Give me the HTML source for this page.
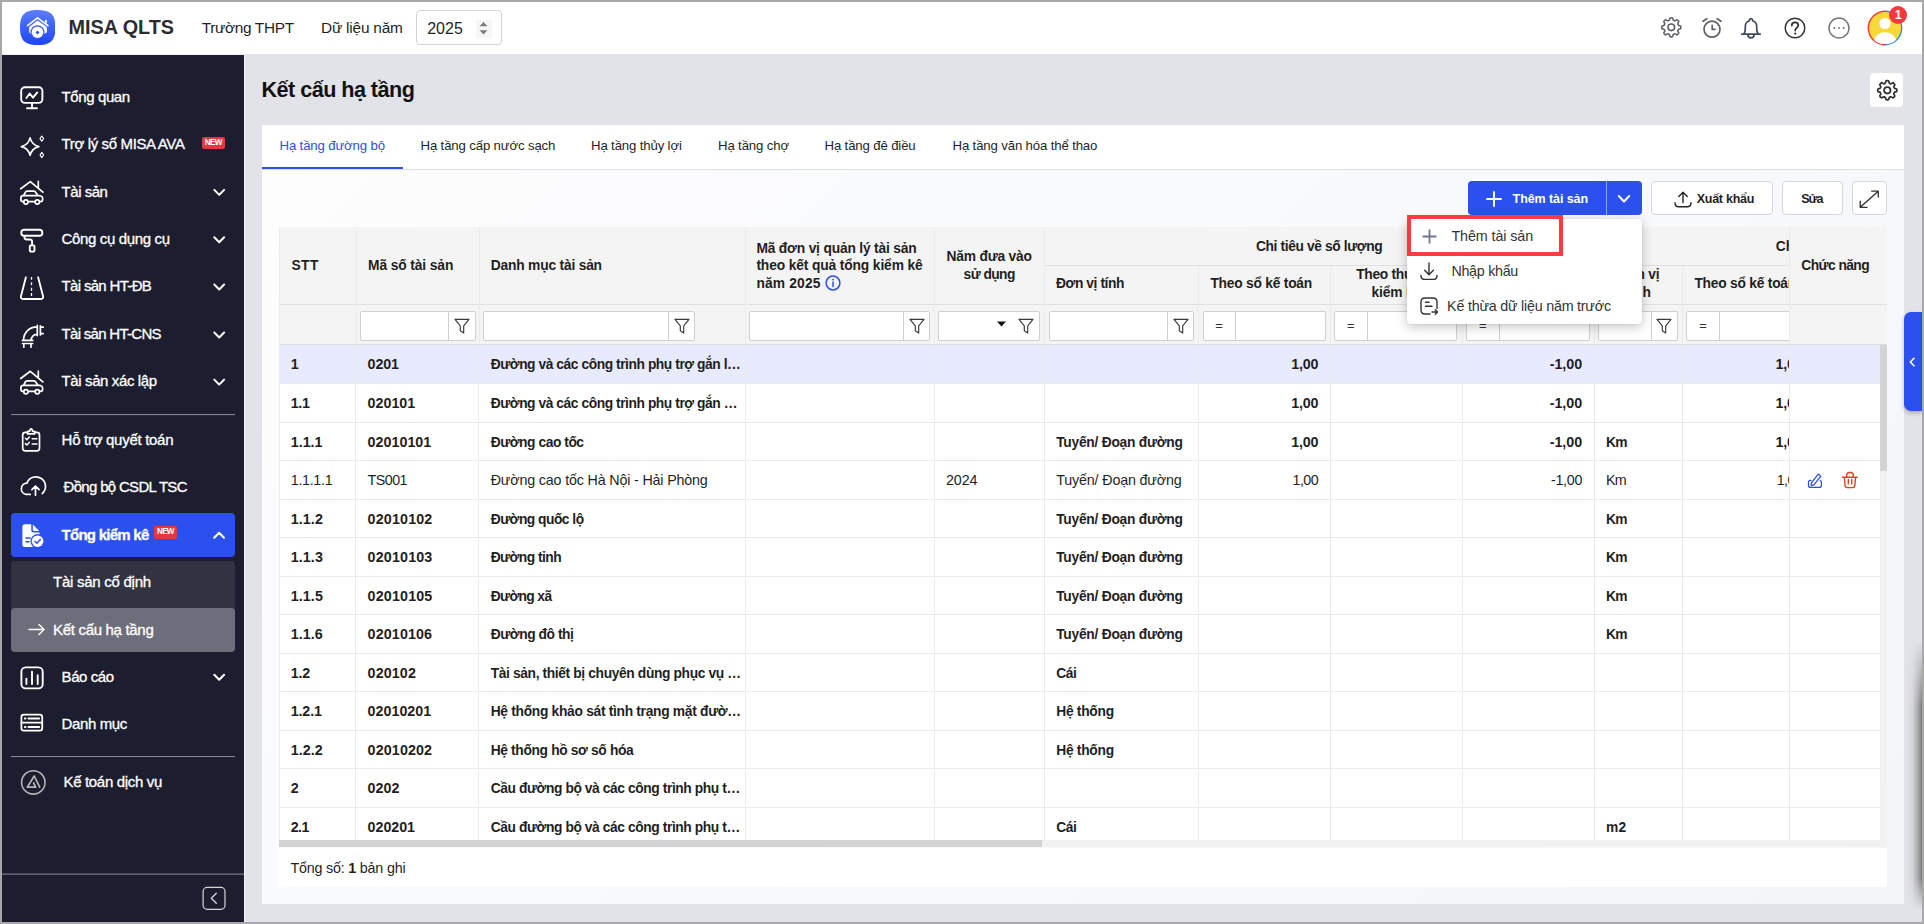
<!DOCTYPE html>
<html lang="vi">
<head>
<meta charset="utf-8">
<title>MISA QLTS - Kết cấu hạ tầng</title>
<style>
*{box-sizing:border-box;margin:0;padding:0}
html,body{width:1924px;height:924px;overflow:hidden}
body{font-family:"Liberation Sans",sans-serif;font-size:14.3px;color:#1f1f1f;background:#a8a8a8;position:relative}
.abs{position:absolute}
.tx{position:absolute;white-space:nowrap}
#app{position:absolute;left:2px;top:2px;width:1920px;height:920px;background:#e2e3e9;overflow:hidden}
/* ---------- top header ---------- */
#top{position:absolute;left:0;top:0;width:1920px;height:52.2px;background:#fff}
#topw{position:absolute;left:0;top:52px;width:243px;height:868px;background:#f0f1f6}
#brand{position:absolute;left:66.5px;top:13px;font-weight:bold;font-size:19.800px;line-height:24px;color:#2b2d33;white-space:nowrap}
#unit{position:absolute;left:199.7px;top:15.7px;font-size:15.4px;line-height:20px;color:#1f1f1f;white-space:nowrap;letter-spacing:-.33px}
#yl{position:absolute;left:319px;top:15.7px;font-size:15.4px;line-height:20px;color:#1f1f1f;white-space:nowrap;letter-spacing:-.2px}
#ysel{position:absolute;left:414.2px;top:8.3px;width:85.600px;height:34.700px;border:1px solid #d2d5dc;border-radius:4px;background:#fff}
#ysel span{position:absolute;left:10px;top:8px;font-size:16px;line-height:20px;color:#1f1f1f}
.hic{position:absolute;top:14px;width:24px;height:24px}
/* ---------- sidebar ---------- */
#side{position:absolute;left:0;top:52.7px;width:241.8px;height:867.3px;background:#1c1d2e;color:#fff}
.mi{position:absolute;left:9px;width:224px;height:43.5px;border-radius:4px}
.mi .t{-webkit-text-stroke:.3px #fff;position:absolute;left:50.600px;top:11.5px;font-size:15px;line-height:20px;white-space:nowrap;letter-spacing:-.35px}
.mi.on{background:#2b50ed;height:44px}
.new{position:absolute;background:#e5373f;color:#fff;font-size:8.2px;font-weight:bold;line-height:12.4px;height:12.4px;width:23.1px;text-align:center;border-radius:2px;letter-spacing:-.75px;text-indent:-.6px}
.sub{position:absolute;left:9px;width:224px;color:#fff}
.sub .t{-webkit-text-stroke:.3px #fff;position:absolute;left:42px;font-size:15px;line-height:20px;white-space:nowrap;letter-spacing:-.35px}
/* ---------- main ---------- */
#title{position:absolute;left:259.5px;top:73.700px;font-size:21.600px;line-height:28px;font-weight:bold;color:#111;white-space:nowrap;letter-spacing:-.53px}
#panel{position:absolute;left:260px;top:123px;width:1642px;height:779px;background:#fff;background:linear-gradient(135deg,#fdfdfe 0%,#f3f6f9 100%)}
#tabs{position:absolute;left:0;top:0;width:1642px;height:44.700px;background:#fff;border-bottom:1px solid #dcdfe6}
.tab{position:absolute;top:12px;font-size:13.2px;line-height:18px;color:#1f1f1f;white-space:nowrap;letter-spacing:-.14px}
.tab.on{color:#2b50ed}
#tabline{position:absolute;left:0;top:42px;width:141px;height:2.400px;background:#2b50ed}
</style>
</head>
<body>
<div id="app">

<!-- TOP HEADER -->
<div id="top">
  <div id="brand">MISA QLTS</div>
  <div id="unit">Trường THPT</div>
  <div id="yl">Dữ liệu năm</div>
  <div id="ysel"><span>2025</span>
    <div class="abs" style="left:59px;top:8.500px;width:16px;height:18px;background:#f6f6f6"></div>
    <svg class="abs" style="left:61.300px;top:10.200px;width:11px;height:15px" viewBox="0 0 11 15"><path d="M5.500 1L9.400 5.300H1.600Z M5.500 13.600L9.400 9.300H1.600Z" fill="#7b7b7b"/></svg>
  </div>
</div>

<div id="topw"></div>
<!-- SIDEBAR -->
<div id="side">
  <!-- menu items -->
  <div class="mi" style="top:20.95px">
    <span class="t" style="letter-spacing:-0.40px">Tổng quan</span>
  </div>
  <div class="mi" style="top:68.15px">
    <span class="t" style="letter-spacing:-0.37px">Trợ lý số MISA AVA</span>
    <span class="new" style="left:191px;top:13.950px">NEW</span>
  </div>
  <div class="mi" style="top:115.45px">
    <span class="t" style="letter-spacing:-0.47px">Tài sản</span>
  </div>
  <div class="mi" style="top:162.75px">
    <span class="t" style="letter-spacing:-0.35px">Công cụ dụng cụ</span>
  </div>
  <div class="mi" style="top:210.05px">
    <span class="t" style="letter-spacing:-0.68px">Tài sản HT-ĐB</span>
  </div>
  <div class="mi" style="top:258.05px">
    <span class="t" style="letter-spacing:-0.71px">Tài sản HT-CNS</span>
  </div>
  <div class="mi" style="top:305.15px">
    <span class="t" style="letter-spacing:-0.39px">Tài sản xác lập</span>
  </div>
  <div class="mi" style="top:363.85px">
    <span class="t" style="letter-spacing:-0.29px">Hỗ trợ quyết toán</span>
  </div>
  <div class="mi" style="top:410.95px">
    <span class="t" style="left:52.500px;letter-spacing:-0.68px">Đồng bộ CSDL TSC</span>
  </div>
  <div class="mi on" style="top:458.3px">
    <span class="t" style="top:12px;font-weight:bold;letter-spacing:-0.74px">Tổng kiểm kê</span>
    <span class="new" style="left:143.200px;top:13.400px">NEW</span>
  </div>
  <div class="sub" style="top:506.8px;height:90.5px;background:#323341;border-radius:4px"></div>
  <div class="sub" style="top:506.8px;height:46px"><span class="t" style="top:10.600px;letter-spacing:-0.26px">Tài sản cố định</span></div>
  <div class="sub" style="top:553.5px;height:43.8px;background:#6c6e7b;border-radius:4px">
    <svg class="abs" style="left:17px;top:15px;width:17px;height:13px" viewBox="0 0 17 13" fill="none" stroke="#fff" stroke-width="1.400" stroke-linecap="round" stroke-linejoin="round"><path d="M1 6.500h15M11 1.500l5 5-5 5"/></svg>
    <span class="t" style="top:11.800px;letter-spacing:-0.31px">Kết cấu hạ tầng</span>
  </div>
  <div class="mi" style="top:600.35px">
    <span class="t" style="letter-spacing:-0.43px">Báo cáo</span>
  </div>
  <div class="mi" style="top:647.95px">
    <span class="t" style="letter-spacing:-0.38px">Danh mục</span>
  </div>
  <div class="mi" style="top:705.55px">
    <span class="t" style="left:52.500px;letter-spacing:-0.33px">Kế toán dịch vụ</span>
  </div>
</div>

<!-- MAIN -->
<div id="title">Kết cấu hạ tầng</div>
<div id="panel">
  <div id="tabs">
    <div class="tab on" style="left:17.5px">Hạ tầng đường bộ</div>
    <div class="tab" style="left:158.5px">Hạ tầng cấp nước sạch</div>
    <div class="tab" style="left:329px">Hạ tầng thủy lợi</div>
    <div class="tab" style="left:456px">Hạ tầng chợ</div>
    <div class="tab" style="left:562.5px">Hạ tầng đê điều</div>
    <div class="tab" style="left:690.5px">Hạ tầng văn hóa thể thao</div>
    <div id="tabline"></div>
  </div>
</div>
<div id="pg" class="abs" style="left:-2px;top:-2px;width:1924px;height:924px">
<!--LOGO-->
<svg class="abs" style="left:19.800px;top:9.700px;width:35.400px;height:35.100px" viewBox="19.800 9.700 35.400 35.100">
<defs><linearGradient id="lg" x1="0" y1="0" x2="0" y2="1"><stop offset="0" stop-color="#5c7dff"/><stop offset="1" stop-color="#1d45f2"/></linearGradient></defs>
<path d="M37.500 9.700C50.500 9.700 55.200 14.200 55.200 27.250C55.200 40.300 50.500 44.800 37.500 44.800C24.500 44.800 19.800 40.300 19.800 27.250C19.800 14.200 24.500 9.700 37.500 9.700Z" fill="url(#lg)"/>
<path d="M27.300 25.300L37.300 17.500 47.800 25.300" fill="none" stroke="#fff" stroke-width="1.600" stroke-linecap="round" stroke-linejoin="round"/>
<path d="M44.700 19.800h1.900v3.600l-1.900-1.500z" fill="#fff"/>
<path d="M29 26.600L37.300 20.100 46.700 26.600V32L44.200 33.600H30.600L29 32Z" fill="#fff"/>
<circle cx="37.300" cy="31.900" r="7" fill="#3157f4"/>
<circle cx="37.300" cy="31.900" r="5.800" fill="#fff"/>
<path d="M37.300 30.200l1.900 2-1.900 2-1.900-2z" fill="#2a50f3"/>
</svg>
<!--/LOGO-->
<!--SIDEICONS-->
<svg class="abs" style="left:0;top:0;width:244px;height:924px" viewBox="0 0 244 924" fill="none" stroke="#fff" stroke-width="1.900" stroke-linecap="round" stroke-linejoin="round">
<!-- tong quan -->
<rect x="21.200" y="87.300" width="21.200" height="15.600" rx="3.600"/><path d="M32 103.300v4.200M27 108.200h10M26.400 98l3.300-4.500 3.300 4.200 4.300-5.300"/>
<!-- ava sparkle -->
<path d="M30.100 137.900Q31.840 144.860 38.800 146.600Q31.840 148.340 30.100 155.300Q28.360 148.340 21.400 146.600Q28.360 144.860 30.100 137.900Z" stroke-width="1.700"/>
<path d="M41.800 136l1.800 2.600-1.800 2.600-1.800-2.600zM41.800 152.400l1.800 2.600-1.800 2.600-1.800-2.600z" stroke-width="1.100"/>
<!-- tai san (house + car) -->
<g stroke-width="1.700"><path d="M20.700 188.800L30.300 181.600 42.900 192.200M38.300 181.400v6.400"/><path d="M23.600 195.600l1.700-3.300c.4-.8 1-1.200 1.900-1.200h6.300c.8 0 1.500.3 2 1l2.300 3.300 3 .6c1.100.3 1.800 1.100 1.800 2.200v1.400c0 1.200-.9 2.100-2.100 2.100H23c-1.200 0-2.100-.9-2.100-2.100v-1.800c0-1.200.9-2.100 2.100-2.200zM23.600 195.600h14.200"/><circle cx="25.900" cy="202" r="2.100" fill="#1c1d2e"/><circle cx="37.300" cy="202" r="2.100" fill="#1c1d2e"/></g>
<g stroke-width="1.700" transform="translate(0 189.700)"><path d="M20.700 188.800L30.300 181.600 42.900 192.200M38.300 181.400v6.400"/><path d="M23.600 195.600l1.700-3.300c.4-.8 1-1.200 1.900-1.200h6.300c.8 0 1.500.3 2 1l2.300 3.300 3 .6c1.100.3 1.800 1.100 1.800 2.200v1.400c0 1.200-.9 2.100-2.100 2.100H23c-1.200 0-2.100-.9-2.100-2.100v-1.800c0-1.200.9-2.100 2.100-2.200zM23.600 195.600h14.200"/><circle cx="25.900" cy="202" r="2.100" fill="#1c1d2e"/><circle cx="37.300" cy="202" r="2.100" fill="#1c1d2e"/></g>
<!-- cong cu (roller) -->
<rect x="21.300" y="229.800" width="21" height="6" rx="2.800"/><path d="M24.500 236.200v1.100c0 1.400.8 2.200 2.200 2.200h3.100c1.500 0 2.300.8 2.300 2.300v2.800"/><rect x="29.800" y="245.300" width="4.700" height="6.300" rx="1.700"/>
<!-- HT-DB road -->
<path d="M25.900 277.300L21 296c-.5 2 .3 3 2.200 3h17.600c1.900 0 2.700-1 2.200-3l-4.900-18.700"/><path d="M31.500 277v2.800M31.500 282.200v3M31.500 287.700v3M31.500 293v3" stroke-width="1.300" stroke-linecap="butt"/>
<!-- HT-CNS pipe -->
<g stroke-width="1.700"><path d="M23.600 340A13.200 13.200 0 0 1 36.800 326.800M31.200 340A5.600 5.600 0 0 1 36.800 334.400M37.300 325.400v10.200M40.400 325.800v9.200M40.400 327.200h2.800M40.400 333.600h2.800M22.400 340.400h10.300M22.400 343.500h10.300M23.800 343.800v3.400M31 343.800v3.400"/></g>
<!-- divider 1 -->
<path d="M11 414.600h224" stroke="#8d8fa0" stroke-width="1" stroke-linecap="butt"/>
<!-- ho tro quyet toan (clipboard) -->
<g stroke-width="1.700"><rect x="22.700" y="432.300" width="16.800" height="18.500" rx="2.600"/><path d="M27.500 433.800v-2.400h2.100c.3-1.700.8-2.500 1.500-2.500s1.200.8 1.500 2.500h2.100v2.400z" fill="#1c1d2e"/><path d="M25.400 438.300l1.400 1.400 2.500-2.600M32.200 438.800h4.700M25.400 443.600l1.400 1.400 2.500-2.600M32.200 444.100h4.700" stroke-width="1.500"/></g>
<!-- dong bo (cloud upload) -->
<g stroke-width="1.700"><path d="M30.200 494.400H26A5.700 5.700 0 0 1 26.900 483.100A9.600 9.600 0 1 1 42.300 493.600"/><path d="M35.500 495.200v-9M31.900 489.700l3.600-3.600 3.600 3.600"/></g>
<!-- tong kiem ke (doc + check) -->
<g stroke="none" fill="#fff"><path d="M24.900 524.200h6.400v6.100q0 2.300 2.300 2.300h5.900v11.900q0 2.500-2.500 2.500H24.900q-2.500 0-2.500-2.500V526.700q0-2.500 2.500-2.500z"/><path d="M32.800 524.500l6.400 6.600h-4.900q-1.500 0-1.500-1.500z"/><circle cx="37.600" cy="541.200" r="7.100" fill="#2b50ed"/><circle cx="37.600" cy="541.200" r="5.800"/></g>
<path d="M26 537.900h4M26 541.800h3M35 541.300l1.900 1.900 3.400-3.700" stroke="#2b50ed" stroke-width="1.500"/>
<!-- bao cao -->
<rect x="21.400" y="667.400" width="21.300" height="21" rx="4.200"/><path d="M26.400 678.600v5.500M32 671.700v12.400M37.700 675.200v8.900"/>
<!-- danh muc -->
<g stroke-width="1.800"><rect x="21.400" y="714.700" width="20.800" height="16" rx="2.400"/><path d="M21.400 722.700h20.800M28.400 718.500h10.800M28.400 727h10.800"/><path d="M24.900 718.500h.6M24.900 727h.6" stroke-width="2"/></g>
<!-- divider 2 -->
<path d="M11 756.600h224" stroke="#8d8fa0" stroke-width="1" stroke-linecap="butt"/>
<!-- ke toan dich vu -->
<circle cx="33.300" cy="782.400" r="11.700" stroke="#b3b3b8" stroke-width="1.600"/>
<path d="M27.300 787.200L34.200 776l5.500 11.200M27.300 787.200h8.400l-2.100-4.200" stroke="#b3b3b8" stroke-width="1.700"/>
<!-- chevrons -->
<g stroke-width="2"><path d="M214.300 189.900l4.900 5 4.900-5"/><path d="M214.300 189.900l4.900 5 4.900-5" transform="translate(0 47.300)"/><path d="M214.300 189.900l4.900 5 4.900-5" transform="translate(0 94.600)"/><path d="M214.300 189.900l4.900 5 4.900-5" transform="translate(0 142.600)"/><path d="M214.300 189.900l4.900 5 4.900-5" transform="translate(0 189.700)"/><path d="M214.300 189.900l4.900 5 4.900-5" transform="translate(0 484.900)"/><path d="M214.200 537.800l4.900-5 4.900 5"/></g>
<!-- bottom divider + collapse -->
<path d="M2 874.100h242" stroke="#8d8fa0" stroke-width="1" stroke-linecap="butt"/>
<rect x="203.100" y="887.400" width="21.900" height="21.900" rx="4" stroke="#d5d5da" stroke-width="1.200"/><path d="M216.300 893.300l-5 5 5 5" stroke="#d5d5da" stroke-width="1.300"/>
</svg>
<!--/SIDEICONS-->
<!--GRID-->
<div id="gridclip" class="abs" style="left:0;top:0;width:1789px;height:924px;overflow:hidden">
<div class="abs" style="left:279px;top:227px;width:1510px;height:117.5px;background:#f4f4f4"></div>
<div class="abs" style="left:279px;top:344.5px;width:1510px;height:495.7px;background:#fff"></div>
<div class="abs" style="left:279px;top:345px;width:1510px;height:38px;background:#e8ebfd"></div>
<div class="abs" style="left:279px;top:304px;width:1510px;height:1px;background:#e0e0e0"></div>
<div class="abs" style="left:1044px;top:265px;width:745px;height:1px;background:#e0e0e0"></div>
<div class="abs" style="left:279px;top:344px;width:1510px;height:1px;background:#e0e0e0"></div>
<div class="abs" style="left:279px;top:383px;width:1510px;height:1px;background:#ebebeb"></div>
<div class="abs" style="left:279px;top:422px;width:1510px;height:1px;background:#ebebeb"></div>
<div class="abs" style="left:279px;top:460px;width:1510px;height:1px;background:#ebebeb"></div>
<div class="abs" style="left:279px;top:499px;width:1510px;height:1px;background:#ebebeb"></div>
<div class="abs" style="left:279px;top:537px;width:1510px;height:1px;background:#ebebeb"></div>
<div class="abs" style="left:279px;top:576px;width:1510px;height:1px;background:#ebebeb"></div>
<div class="abs" style="left:279px;top:614px;width:1510px;height:1px;background:#ebebeb"></div>
<div class="abs" style="left:279px;top:653px;width:1510px;height:1px;background:#ebebeb"></div>
<div class="abs" style="left:279px;top:691px;width:1510px;height:1px;background:#ebebeb"></div>
<div class="abs" style="left:279px;top:730px;width:1510px;height:1px;background:#ebebeb"></div>
<div class="abs" style="left:279px;top:768px;width:1510px;height:1px;background:#ebebeb"></div>
<div class="abs" style="left:279px;top:807px;width:1510px;height:1px;background:#ebebeb"></div>
<div class="abs" style="left:279px;top:227px;width:1px;height:613.2px;background:#ebebeb"></div>
<div class="abs" style="left:356px;top:227px;width:1px;height:118px;background:#ebebeb"></div>
<div class="abs" style="left:355px;top:345px;width:1px;height:495.2px;background:#ebebeb"></div>
<div class="abs" style="left:479px;top:227px;width:1px;height:118px;background:#ebebeb"></div>
<div class="abs" style="left:478px;top:345px;width:1px;height:495.2px;background:#ebebeb"></div>
<div class="abs" style="left:745px;top:227px;width:1px;height:118px;background:#ebebeb"></div>
<div class="abs" style="left:745px;top:345px;width:1px;height:495.2px;background:#ebebeb"></div>
<div class="abs" style="left:934px;top:227px;width:1px;height:118px;background:#ebebeb"></div>
<div class="abs" style="left:934px;top:345px;width:1px;height:495.2px;background:#ebebeb"></div>
<div class="abs" style="left:1044px;top:227px;width:1px;height:118px;background:#ebebeb"></div>
<div class="abs" style="left:1044px;top:345px;width:1px;height:495.2px;background:#ebebeb"></div>
<div class="abs" style="left:1198px;top:265.5px;width:1px;height:79.5px;background:#ebebeb"></div>
<div class="abs" style="left:1198px;top:345px;width:1px;height:495.2px;background:#ebebeb"></div>
<div class="abs" style="left:1330px;top:265.5px;width:1px;height:79.5px;background:#ebebeb"></div>
<div class="abs" style="left:1330px;top:345px;width:1px;height:495.2px;background:#ebebeb"></div>
<div class="abs" style="left:1462px;top:265.5px;width:1px;height:79.5px;background:#ebebeb"></div>
<div class="abs" style="left:1462px;top:345px;width:1px;height:495.2px;background:#ebebeb"></div>
<div class="abs" style="left:1594px;top:227px;width:1px;height:118px;background:#ebebeb"></div>
<div class="abs" style="left:1594px;top:345px;width:1px;height:495.2px;background:#ebebeb"></div>
<div class="abs" style="left:1682px;top:265.5px;width:1px;height:79.5px;background:#ebebeb"></div>
<div class="abs" style="left:1682px;top:345px;width:1px;height:495.2px;background:#ebebeb"></div>
<div class="tx" style="top:257px;line-height:18px;font-size:13.8px;color:#1f1f1f;font-weight:bold;letter-spacing:0.48px;left:291.4px;">STT</div>
<div class="tx" style="top:257px;line-height:18px;font-size:13.8px;color:#1f1f1f;font-weight:bold;letter-spacing:-0.11px;left:368px;">Mã số tài sản</div>
<div class="tx" style="top:257px;line-height:18px;font-size:13.8px;color:#1f1f1f;font-weight:bold;letter-spacing:-0.2px;left:490.8px;">Danh mục tài sản</div>
<div class="tx" style="top:239.8px;line-height:18px;font-size:13.8px;color:#1f1f1f;font-weight:bold;letter-spacing:-0.18px;left:756.4px;">Mã đơn vị quản lý tài sản</div>
<div class="tx" style="top:257.3px;line-height:18px;font-size:13.8px;color:#1f1f1f;font-weight:bold;letter-spacing:-0.13px;left:756.4px;">theo kết quả tổng kiểm kê</div>
<div class="tx" style="top:274.9px;line-height:18px;font-size:13.8px;color:#1f1f1f;font-weight:bold;letter-spacing:0.16px;left:756.4px;">năm 2025</div>
<svg class="abs" style="left:825px;top:275.300px;width:16px;height:16px" viewBox="0 0 16 16" fill="none" stroke="#2b50ed" stroke-width="1.500"><circle cx="8" cy="8" r="6.900"/><path d="M8 7v4.500" stroke-linecap="round"/><circle cx="8" cy="4.600" r=".9" fill="#2b50ed" stroke="none"/></svg>
<div class="tx" style="top:248.2px;line-height:18px;font-size:13.8px;color:#1f1f1f;font-weight:bold;letter-spacing:-0.21px;left:946.6px;">Năm đưa vào</div>
<div class="tx" style="top:265.8px;line-height:18px;font-size:13.8px;color:#1f1f1f;font-weight:bold;letter-spacing:-0.57px;left:963.6px;">sử dụng</div>
<div class="tx" style="top:237.8px;line-height:18px;font-size:13.8px;color:#1f1f1f;font-weight:bold;letter-spacing:-0.38px;left:1255.95px;">Chỉ tiêu về số lượng</div>
<div class="tx" style="top:237.8px;line-height:18px;font-size:13.8px;color:#1f1f1f;font-weight:bold;letter-spacing:-0.06px;left:1775.8px;">Chỉ tiêu về giá trị</div>
<div class="tx" style="top:274.8px;line-height:18px;font-size:13.8px;color:#1f1f1f;font-weight:bold;letter-spacing:-0.42px;left:1056px;">Đơn vị tính</div>
<div class="tx" style="top:274.8px;line-height:18px;font-size:13.8px;color:#1f1f1f;font-weight:bold;letter-spacing:-0.23px;left:1210.4px;">Theo sổ kế toán</div>
<div class="tx" style="top:265.8px;line-height:18px;font-size:13.8px;color:#1f1f1f;font-weight:bold;letter-spacing:-0.3px;left:1356.2px;">Theo thực tế</div>
<div class="tx" style="top:283.8px;line-height:18px;font-size:13.8px;color:#1f1f1f;font-weight:bold;letter-spacing:-0.19px;left:1371.55px;">kiểm kê</div>
<div class="tx" style="top:274.8px;line-height:18px;font-size:13.8px;color:#1f1f1f;font-weight:bold;letter-spacing:-0.24px;left:1492.2px;">Chênh lệch</div>
<div class="tx" style="top:265.8px;line-height:18px;font-size:13.8px;color:#1f1f1f;font-weight:bold;letter-spacing:-0.26px;left:1617.3px;">Đơn vị</div>
<div class="tx" style="top:283.8px;line-height:18px;font-size:13.8px;color:#1f1f1f;font-weight:bold;letter-spacing:-0.07px;left:1625.8px;">tính</div>
<div class="tx" style="top:274.8px;line-height:18px;font-size:13.8px;color:#1f1f1f;font-weight:bold;letter-spacing:-0.23px;left:1694.4px;">Theo sổ kế toán</div>
<div class="abs" style="left:360.3px;top:311.3px;width:115.5px;height:30px;background:#fff;border:1px solid #cfcfcf;border-radius:2px"></div>
<div class="abs" style="left:447.9px;top:311.8px;width:1px;height:29px;background:#cfcfcf"></div>
<svg class="abs" style="left:453.1px;top:316.6px;width:18px;height:18px" viewBox="0 0 18 18" fill="none" stroke="#3a3a3a" stroke-width="1.150" stroke-linejoin="round"><path d="M2 2.300h14l-5.300 6.500v7.200l-3.400-2.200V8.800z"/></svg>
<div class="abs" style="left:483.4px;top:311.3px;width:211.2px;height:30px;background:#fff;border:1px solid #cfcfcf;border-radius:2px"></div>
<div class="abs" style="left:667.9px;top:311.8px;width:1px;height:29px;background:#cfcfcf"></div>
<svg class="abs" style="left:672.5px;top:316.6px;width:18px;height:18px" viewBox="0 0 18 18" fill="none" stroke="#3a3a3a" stroke-width="1.150" stroke-linejoin="round"><path d="M2 2.300h14l-5.300 6.500v7.200l-3.400-2.200V8.800z"/></svg>
<div class="abs" style="left:749.3px;top:311.3px;width:180.5px;height:30px;background:#fff;border:1px solid #cfcfcf;border-radius:2px"></div>
<div class="abs" style="left:902.7px;top:311.8px;width:1px;height:29px;background:#cfcfcf"></div>
<svg class="abs" style="left:907.5px;top:316.6px;width:18px;height:18px" viewBox="0 0 18 18" fill="none" stroke="#3a3a3a" stroke-width="1.150" stroke-linejoin="round"><path d="M2 2.300h14l-5.300 6.500v7.200l-3.400-2.200V8.800z"/></svg>
<div class="abs" style="left:938.3px;top:311.3px;width:101.4px;height:30px;background:#fff;border:1px solid #cfcfcf;border-radius:2px"></div>
<svg class="abs" style="left:996.500px;top:320.600px;width:9px;height:6px" viewBox="0 0 9 6"><path d="M0 .5h9L4.500 5.500z" fill="#111"/></svg>
<svg class="abs" style="left:1017px;top:316.6px;width:18px;height:18px" viewBox="0 0 18 18" fill="none" stroke="#3a3a3a" stroke-width="1.150" stroke-linejoin="round"><path d="M2 2.300h14l-5.300 6.500v7.200l-3.400-2.200V8.800z"/></svg>
<div class="abs" style="left:1048.5px;top:311.3px;width:145.3px;height:30px;background:#fff;border:1px solid #cfcfcf;border-radius:2px"></div>
<div class="abs" style="left:1167px;top:311.8px;width:1px;height:29px;background:#cfcfcf"></div>
<svg class="abs" style="left:1171.65px;top:316.6px;width:18px;height:18px" viewBox="0 0 18 18" fill="none" stroke="#3a3a3a" stroke-width="1.150" stroke-linejoin="round"><path d="M2 2.300h14l-5.300 6.500v7.200l-3.400-2.200V8.800z"/></svg>
<div class="abs" style="left:1202.5px;top:311.3px;width:123px;height:30px;background:#fff;border:1px solid #cfcfcf;border-radius:2px"></div>
<div class="abs" style="left:1234.9px;top:311.8px;width:1px;height:29px;background:#cfcfcf"></div>
<div class="tx" style="top:317px;line-height:18px;font-size:13px;color:#333;left:1215.15px;">=</div>
<div class="abs" style="left:1334.4px;top:311.3px;width:123.1px;height:30px;background:#fff;border:1px solid #cfcfcf;border-radius:2px"></div>
<div class="abs" style="left:1366.5px;top:311.8px;width:1px;height:29px;background:#cfcfcf"></div>
<div class="tx" style="top:317px;line-height:18px;font-size:13px;color:#333;left:1346.9px;">=</div>
<div class="abs" style="left:1466.4px;top:311.3px;width:123.4px;height:30px;background:#fff;border:1px solid #cfcfcf;border-radius:2px"></div>
<div class="abs" style="left:1498.9px;top:311.8px;width:1px;height:29px;background:#cfcfcf"></div>
<div class="tx" style="top:317px;line-height:18px;font-size:13px;color:#333;left:1479.1px;">=</div>
<div class="abs" style="left:1598px;top:311.3px;width:79.5px;height:30px;background:#fff;border:1px solid #cfcfcf;border-radius:2px"></div>
<div class="abs" style="left:1650.9px;top:311.8px;width:1px;height:29px;background:#cfcfcf"></div>
<svg class="abs" style="left:1655.45px;top:316.6px;width:18px;height:18px" viewBox="0 0 18 18" fill="none" stroke="#3a3a3a" stroke-width="1.150" stroke-linejoin="round"><path d="M2 2.300h14l-5.300 6.500v7.200l-3.400-2.200V8.800z"/></svg>
<div class="abs" style="left:1686.4px;top:311.3px;width:123.1px;height:30px;background:#fff;border:1px solid #cfcfcf;border-radius:2px"></div>
<div class="abs" style="left:1719px;top:311.8px;width:1px;height:29px;background:#cfcfcf"></div>
<div class="tx" style="top:317px;line-height:18px;font-size:13px;color:#333;left:1699.15px;">=</div>
<div class="tx" style="top:355px;line-height:18px;font-size:14.3px;color:#1f1f1f;font-weight:bold;left:290.8px;">1</div>
<div class="tx" style="top:355px;line-height:18px;font-size:14.3px;color:#1f1f1f;font-weight:bold;letter-spacing:-0.13px;left:367.6px;">0201</div>
<div class="tx" style="top:356px;line-height:18px;font-size:13.8px;color:#1f1f1f;font-weight:bold;letter-spacing:-0.44px;left:490.7px;">Đường và các công trình phụ trợ gắn l…</div>
<div class="tx" style="top:355px;line-height:18px;font-size:14.3px;color:#1f1f1f;font-weight:bold;letter-spacing:-0.23px;left:1291.3px;">1,00</div>
<div class="tx" style="top:355px;line-height:18px;font-size:14.3px;color:#1f1f1f;font-weight:bold;letter-spacing:-0.02px;left:1549.7px;">-1,00</div>
<div class="tx" style="top:355px;line-height:18px;font-size:14.3px;color:#1f1f1f;font-weight:bold;letter-spacing:-0.23px;left:1775.5px;">1,00</div>
<div class="tx" style="top:394px;line-height:18px;font-size:14.3px;color:#1f1f1f;font-weight:bold;letter-spacing:-0.39px;left:290.8px;">1.1</div>
<div class="tx" style="top:394px;line-height:18px;font-size:14.3px;color:#1f1f1f;font-weight:bold;letter-spacing:-0.02px;left:367.6px;">020101</div>
<div class="tx" style="top:395px;line-height:18px;font-size:13.8px;color:#1f1f1f;font-weight:bold;letter-spacing:-0.44px;left:490.7px;">Đường và các công trình phụ trợ gắn …</div>
<div class="tx" style="top:394px;line-height:18px;font-size:14.3px;color:#1f1f1f;font-weight:bold;letter-spacing:-0.23px;left:1291.3px;">1,00</div>
<div class="tx" style="top:394px;line-height:18px;font-size:14.3px;color:#1f1f1f;font-weight:bold;letter-spacing:-0.02px;left:1549.7px;">-1,00</div>
<div class="tx" style="top:394px;line-height:18px;font-size:14.3px;color:#1f1f1f;font-weight:bold;letter-spacing:-0.23px;left:1775.5px;">1,00</div>
<div class="tx" style="top:433px;line-height:18px;font-size:14.3px;color:#1f1f1f;font-weight:bold;letter-spacing:-0.04px;left:290.8px;">1.1.1</div>
<div class="tx" style="top:433px;line-height:18px;font-size:14.3px;color:#1f1f1f;font-weight:bold;letter-spacing:0.01px;left:367.6px;">02010101</div>
<div class="tx" style="top:434px;line-height:18px;font-size:13.8px;color:#1f1f1f;font-weight:bold;letter-spacing:-0.45px;left:490.7px;">Đường cao tốc</div>
<div class="tx" style="top:434px;line-height:18px;font-size:13.8px;color:#1f1f1f;font-weight:bold;letter-spacing:-0.25px;left:1056.2px;">Tuyến/ Đoạn đường</div>
<div class="tx" style="top:433px;line-height:18px;font-size:14.3px;color:#1f1f1f;font-weight:bold;letter-spacing:-0.23px;left:1291.3px;">1,00</div>
<div class="tx" style="top:433px;line-height:18px;font-size:14.3px;color:#1f1f1f;font-weight:bold;letter-spacing:-0.02px;left:1549.7px;">-1,00</div>
<div class="tx" style="top:433px;line-height:18px;font-size:14.3px;color:#1f1f1f;font-weight:bold;letter-spacing:-0.23px;left:1775.5px;">1,00</div>
<div class="tx" style="top:434px;line-height:18px;font-size:13.8px;color:#1f1f1f;font-weight:bold;letter-spacing:-0.82px;left:1606px;">Km</div>
<div class="tx" style="top:471px;line-height:18px;font-size:14.3px;color:#1f1f1f;letter-spacing:-0.32px;left:290.8px;">1.1.1.1</div>
<div class="tx" style="top:471px;line-height:18px;font-size:14.3px;color:#1f1f1f;letter-spacing:-0.55px;left:367.6px;">TS001</div>
<div class="tx" style="top:471px;line-height:18px;font-size:14.3px;color:#1f1f1f;letter-spacing:-0.17px;left:490.7px;">Đường cao tốc Hà Nội - Hải Phòng</div>
<div class="tx" style="top:471px;line-height:18px;font-size:14.3px;color:#1f1f1f;letter-spacing:-0.1px;left:946px;">2024</div>
<div class="tx" style="top:471px;line-height:18px;font-size:14.3px;color:#1f1f1f;letter-spacing:-0.16px;left:1056.2px;">Tuyến/ Đoạn đường</div>
<div class="tx" style="top:471px;line-height:18px;font-size:14.3px;color:#1f1f1f;letter-spacing:-0.53px;left:1292.5px;">1,00</div>
<div class="tx" style="top:471px;line-height:18px;font-size:14.3px;color:#1f1f1f;letter-spacing:-0.26px;left:1550.9px;">-1,00</div>
<div class="tx" style="top:471px;line-height:18px;font-size:14.3px;color:#1f1f1f;letter-spacing:-0.53px;left:1776.7px;">1,00</div>
<div class="tx" style="top:471px;line-height:18px;font-size:14.3px;color:#1f1f1f;letter-spacing:-0.83px;left:1606px;">Km</div>
<div class="tx" style="top:510px;line-height:18px;font-size:14.3px;color:#1f1f1f;font-weight:bold;letter-spacing:0.06px;left:290.8px;">1.1.2</div>
<div class="tx" style="top:510px;line-height:18px;font-size:14.3px;color:#1f1f1f;font-weight:bold;letter-spacing:0.16px;left:367.6px;">02010102</div>
<div class="tx" style="top:511px;line-height:18px;font-size:13.8px;color:#1f1f1f;font-weight:bold;letter-spacing:-0.51px;left:490.7px;">Đường quốc lộ</div>
<div class="tx" style="top:511px;line-height:18px;font-size:13.8px;color:#1f1f1f;font-weight:bold;letter-spacing:-0.25px;left:1056.2px;">Tuyến/ Đoạn đường</div>
<div class="tx" style="top:511px;line-height:18px;font-size:13.8px;color:#1f1f1f;font-weight:bold;letter-spacing:-0.82px;left:1606px;">Km</div>
<div class="tx" style="top:548px;line-height:18px;font-size:14.3px;color:#1f1f1f;font-weight:bold;letter-spacing:0.06px;left:290.8px;">1.1.3</div>
<div class="tx" style="top:548px;line-height:18px;font-size:14.3px;color:#1f1f1f;font-weight:bold;letter-spacing:0.16px;left:367.6px;">02010103</div>
<div class="tx" style="top:549px;line-height:18px;font-size:13.8px;color:#1f1f1f;font-weight:bold;letter-spacing:-0.54px;left:490.7px;">Đường tỉnh</div>
<div class="tx" style="top:549px;line-height:18px;font-size:13.8px;color:#1f1f1f;font-weight:bold;letter-spacing:-0.25px;left:1056.2px;">Tuyến/ Đoạn đường</div>
<div class="tx" style="top:549px;line-height:18px;font-size:13.8px;color:#1f1f1f;font-weight:bold;letter-spacing:-0.82px;left:1606px;">Km</div>
<div class="tx" style="top:587px;line-height:18px;font-size:14.3px;color:#1f1f1f;font-weight:bold;letter-spacing:0.06px;left:290.8px;">1.1.5</div>
<div class="tx" style="top:587px;line-height:18px;font-size:14.3px;color:#1f1f1f;font-weight:bold;letter-spacing:0.16px;left:367.6px;">02010105</div>
<div class="tx" style="top:588px;line-height:18px;font-size:13.8px;color:#1f1f1f;font-weight:bold;letter-spacing:-0.63px;left:490.7px;">Đường xã</div>
<div class="tx" style="top:588px;line-height:18px;font-size:13.8px;color:#1f1f1f;font-weight:bold;letter-spacing:-0.25px;left:1056.2px;">Tuyến/ Đoạn đường</div>
<div class="tx" style="top:588px;line-height:18px;font-size:13.8px;color:#1f1f1f;font-weight:bold;letter-spacing:-0.82px;left:1606px;">Km</div>
<div class="tx" style="top:625px;line-height:18px;font-size:14.3px;color:#1f1f1f;font-weight:bold;letter-spacing:0.02px;left:290.8px;">1.1.6</div>
<div class="tx" style="top:625px;line-height:18px;font-size:14.3px;color:#1f1f1f;font-weight:bold;letter-spacing:0.12px;left:367.6px;">02010106</div>
<div class="tx" style="top:626px;line-height:18px;font-size:13.8px;color:#1f1f1f;font-weight:bold;letter-spacing:-0.43px;left:490.7px;">Đường đô thị</div>
<div class="tx" style="top:626px;line-height:18px;font-size:13.8px;color:#1f1f1f;font-weight:bold;letter-spacing:-0.25px;left:1056.2px;">Tuyến/ Đoạn đường</div>
<div class="tx" style="top:626px;line-height:18px;font-size:13.8px;color:#1f1f1f;font-weight:bold;letter-spacing:-0.82px;left:1606px;">Km</div>
<div class="tx" style="top:664px;line-height:18px;font-size:14.3px;color:#1f1f1f;font-weight:bold;letter-spacing:-0.23px;left:290.8px;">1.2</div>
<div class="tx" style="top:664px;line-height:18px;font-size:14.3px;color:#1f1f1f;font-weight:bold;letter-spacing:0.11px;left:367.6px;">020102</div>
<div class="tx" style="top:665px;line-height:18px;font-size:13.8px;color:#1f1f1f;font-weight:bold;letter-spacing:-0.37px;left:490.7px;">Tài sản, thiết bị chuyên dùng phục vụ …</div>
<div class="tx" style="top:665px;line-height:18px;font-size:13.8px;color:#1f1f1f;font-weight:bold;letter-spacing:-0.42px;left:1056.2px;">Cái</div>
<div class="tx" style="top:702px;line-height:18px;font-size:14.3px;color:#1f1f1f;font-weight:bold;letter-spacing:-0.18px;left:290.8px;">1.2.1</div>
<div class="tx" style="top:702px;line-height:18px;font-size:14.3px;color:#1f1f1f;font-weight:bold;letter-spacing:0px;left:367.6px;">02010201</div>
<div class="tx" style="top:703px;line-height:18px;font-size:13.8px;color:#1f1f1f;font-weight:bold;letter-spacing:-0.3px;left:490.7px;">Hệ thống khảo sát tình trạng mặt đườ…</div>
<div class="tx" style="top:703px;line-height:18px;font-size:13.8px;color:#1f1f1f;font-weight:bold;letter-spacing:-0.27px;left:1056.2px;">Hệ thống</div>
<div class="tx" style="top:741px;line-height:18px;font-size:14.3px;color:#1f1f1f;font-weight:bold;letter-spacing:0.02px;left:290.8px;">1.2.2</div>
<div class="tx" style="top:741px;line-height:18px;font-size:14.3px;color:#1f1f1f;font-weight:bold;letter-spacing:0.12px;left:367.6px;">02010202</div>
<div class="tx" style="top:742px;line-height:18px;font-size:13.8px;color:#1f1f1f;font-weight:bold;letter-spacing:-0.35px;left:490.7px;">Hệ thống hồ sơ số hóa</div>
<div class="tx" style="top:742px;line-height:18px;font-size:13.8px;color:#1f1f1f;font-weight:bold;letter-spacing:-0.27px;left:1056.2px;">Hệ thống</div>
<div class="tx" style="top:779px;line-height:18px;font-size:14.3px;color:#1f1f1f;font-weight:bold;left:290.8px;">2</div>
<div class="tx" style="top:779px;line-height:18px;font-size:14.3px;color:#1f1f1f;font-weight:bold;letter-spacing:0.02px;left:367.6px;">0202</div>
<div class="tx" style="top:780px;line-height:18px;font-size:13.8px;color:#1f1f1f;font-weight:bold;letter-spacing:-0.41px;left:490.7px;">Cầu đường bộ và các công trình phụ t…</div>
<div class="tx" style="top:818px;line-height:18px;font-size:14.3px;color:#1f1f1f;font-weight:bold;letter-spacing:-0.63px;left:290.8px;">2.1</div>
<div class="tx" style="top:818px;line-height:18px;font-size:14.3px;color:#1f1f1f;font-weight:bold;letter-spacing:-0.05px;left:367.6px;">020201</div>
<div class="tx" style="top:819px;line-height:18px;font-size:13.8px;color:#1f1f1f;font-weight:bold;letter-spacing:-0.41px;left:490.7px;">Cầu đường bộ và các công trình phụ t…</div>
<div class="tx" style="top:819px;line-height:18px;font-size:13.8px;color:#1f1f1f;font-weight:bold;letter-spacing:-0.42px;left:1056.2px;">Cái</div>
<div class="tx" style="top:819px;line-height:18px;font-size:13.8px;color:#1f1f1f;font-weight:bold;letter-spacing:0.13px;left:1606px;">m2</div>
</div>
<div class="abs" style="left:1789px;top:227px;width:98px;height:117.5px;background:#f4f4f4"></div>
<div class="abs" style="left:1789px;top:344.5px;width:91px;height:495.7px;background:#fff"></div>
<div class="abs" style="left:1789px;top:345px;width:91px;height:38px;background:#e8ebfd"></div>
<div class="abs" style="left:1789px;top:304px;width:98px;height:1px;background:#e0e0e0"></div>
<div class="abs" style="left:1789px;top:344px;width:98px;height:1px;background:#e0e0e0"></div>
<div class="abs" style="left:1789px;top:383px;width:91px;height:1px;background:#ebebeb"></div>
<div class="abs" style="left:1789px;top:422px;width:91px;height:1px;background:#ebebeb"></div>
<div class="abs" style="left:1789px;top:460px;width:91px;height:1px;background:#ebebeb"></div>
<div class="abs" style="left:1789px;top:499px;width:91px;height:1px;background:#ebebeb"></div>
<div class="abs" style="left:1789px;top:537px;width:91px;height:1px;background:#ebebeb"></div>
<div class="abs" style="left:1789px;top:576px;width:91px;height:1px;background:#ebebeb"></div>
<div class="abs" style="left:1789px;top:614px;width:91px;height:1px;background:#ebebeb"></div>
<div class="abs" style="left:1789px;top:653px;width:91px;height:1px;background:#ebebeb"></div>
<div class="abs" style="left:1789px;top:691px;width:91px;height:1px;background:#ebebeb"></div>
<div class="abs" style="left:1789px;top:730px;width:91px;height:1px;background:#ebebeb"></div>
<div class="abs" style="left:1789px;top:768px;width:91px;height:1px;background:#ebebeb"></div>
<div class="abs" style="left:1789px;top:807px;width:91px;height:1px;background:#ebebeb"></div>
<div class="abs" style="left:1789px;top:227px;width:1px;height:613.2px;background:#ebebeb"></div>
<div class="tx" style="top:257px;line-height:18px;font-size:13.8px;color:#1f1f1f;font-weight:bold;letter-spacing:-0.56px;left:1801.3px;">Chức năng</div>
<svg class="abs" style="left:1800px;top:465px;width:70px;height:30px" viewBox="1800 465 70 30" fill="none" stroke-linecap="round" stroke-linejoin="round"><g stroke="#2b50ed" stroke-width="1.300"><path d="M1818.300 474.100l2.100 1.600q.5.400.1.900l-6.600 8.200-2.600.700.100-2.700 6.600-8.400q.2-.3.300-.3z"/><path d="M1811 480.400h-.5q-2 0-2 2v2.800q0 2.200 2.200 2.200h8.500q2.200 0 2.200-2.200v-2.800q0-1.200-.9-1.900"/></g><g stroke="#de401c" stroke-width="1.400"><path d="M1842.600 477.200h14.600M1846.600 477v-1.700q0-2.800 2.800-2.800h1.100q2.800 0 2.800 2.800v1.700M1844.400 477.500l.6 7.800q.2 2.300 2.400 2.300h5.100q2.200 0 2.400-2.300l.6-7.800M1848.300 479.400v4.300M1851.700 479.400v4.300"/></g></svg>
<div class="abs" style="left:1880px;top:344.5px;width:7px;height:495.7px;background:#f1f1f1"></div>
<div class="abs" style="left:1880px;top:345px;width:7px;height:126.4px;background:#d3d3d3"></div>
<div class="abs" style="left:279px;top:840.2px;width:1608px;height:7.3px;background:#f1f1f1"></div>
<div class="abs" style="left:279px;top:840.2px;width:763px;height:7.3px;background:#d3d3d3"></div>
<div class="abs" style="left:279px;top:847.5px;width:1608px;height:39.5px;background:#fff"></div>
<div class="tx" style="left:290.500px;top:859px;line-height:18px;font-size:14.300px;color:#1f1f1f;letter-spacing:-.2px">Tổng số: <b>1</b> bản ghi</div>
<!--/GRID-->
<!--OVER-->
<!-- toolbar -->
<div class="abs" style="left:1468.200px;top:181.100px;width:173.800px;height:34.400px;background:#2b50ed;border-radius:4px"></div>
<div class="abs" style="left:1605.900px;top:181.100px;width:1px;height:34.400px;background:#8da2f6"></div>
<svg class="abs" style="left:1485.800px;top:190.900px;width:16px;height:16px" viewBox="0 0 16 16" fill="none" stroke="#fff" stroke-width="1.900" stroke-linecap="round"><path d="M8 1v14M1 8h14"/></svg>
<div class="tx" style="left:1512.600px;top:189.600px;line-height:18px;font-size:12.500px;font-weight:bold;color:#fff;letter-spacing:-.08px">Thêm tài sản</div>
<svg class="abs" style="left:1617px;top:193.500px;width:14px;height:10px" viewBox="0 0 14 10" fill="none" stroke="#fff" stroke-width="2" stroke-linecap="round" stroke-linejoin="round"><path d="M1.800 2l5.200 5.500L12.200 2"/></svg>
<div class="abs" style="left:1651.400px;top:181.100px;width:122px;height:34.400px;background:#fff;border:1px solid #d3d6de;border-radius:4px"></div>
<svg class="abs" style="left:1674px;top:190.600px;width:18px;height:17px" viewBox="0 0 18 17" fill="none" stroke="#222" stroke-width="1.400" stroke-linecap="round" stroke-linejoin="round"><path d="M9 11.500V1.500M4.800 5.500L9 1.300l4.200 4.200M1 11.800c0 2.600 1.200 4 3.800 4h8.400c2.600 0 3.800-1.400 3.800-4"/></svg>
<div class="tx" style="left:1696.700px;top:189.600px;line-height:18px;font-size:12.500px;font-weight:bold;color:#1f1f1f;letter-spacing:-.25px">Xuất khẩu</div>
<div class="abs" style="left:1782.400px;top:181.100px;width:60.200px;height:34.400px;background:#fff;border:1px solid #d3d6de;border-radius:4px"></div>
<div class="tx" style="left:1801.200px;top:189.600px;line-height:18px;font-size:12.500px;font-weight:bold;color:#1f1f1f;letter-spacing:-1.1px">Sửa</div>
<div class="abs" style="left:1852.400px;top:181.100px;width:34.200px;height:34.400px;background:#fff;border:1px solid #d3d6de;border-radius:4px"></div>
<svg class="abs" style="left:1859px;top:190.300px;width:20.500px;height:18.500px" viewBox="0 0 21 19" fill="none" stroke="#333" stroke-width="1.400" stroke-linecap="round" stroke-linejoin="round"><path d="M1.500 17.500L19.500 1.500M13 1.200h6.800v6M1.200 11.500v6.300h7"/></svg>

<!-- page settings button -->
<div class="abs" style="left:1869.900px;top:73px;width:33.400px;height:34px;background:#fff;border-radius:4px"></div>
<svg class="abs" style="left:1875.600px;top:79px;width:22.600px;height:22.600px" viewBox="0 0 24 24" fill="none" stroke="#333" stroke-width="1.900" stroke-linejoin="round"><path d="M9.30 4.77Q10.11 4.43 10.22 3.44L10.28 2.82Q10.39 1.83 11.61 1.83L12.39 1.83Q13.61 1.83 13.72 2.82L13.78 3.44Q13.89 4.43 14.70 4.77L15.21 4.98Q16.02 5.31 16.79 4.69L17.28 4.29Q18.05 3.67 18.92 4.53L19.47 5.08Q20.33 5.95 19.71 6.72L19.31 7.21Q18.69 7.98 19.02 8.79L19.23 9.30Q19.57 10.11 20.56 10.22L21.18 10.28Q22.17 10.39 22.17 11.61L22.17 12.39Q22.17 13.61 21.18 13.72L20.56 13.78Q19.57 13.89 19.23 14.70L19.02 15.21Q18.69 16.02 19.31 16.79L19.71 17.28Q20.33 18.05 19.47 18.92L18.92 19.47Q18.05 20.33 17.28 19.71L16.79 19.31Q16.02 18.69 15.21 19.02L14.70 19.23Q13.89 19.57 13.78 20.56L13.72 21.18Q13.61 22.17 12.39 22.17L11.61 22.17Q10.39 22.17 10.28 21.18L10.22 20.56Q10.11 19.57 9.30 19.23L8.79 19.02Q7.98 18.69 7.21 19.31L6.72 19.71Q5.95 20.33 5.08 19.47L4.53 18.92Q3.67 18.05 4.29 17.28L4.69 16.79Q5.31 16.02 4.98 15.21L4.77 14.70Q4.43 13.89 3.44 13.78L2.82 13.72Q1.83 13.61 1.83 12.39L1.83 11.61Q1.83 10.39 2.82 10.28L3.44 10.22Q4.43 10.11 4.77 9.30L4.98 8.79Q5.31 7.98 4.69 7.21L4.29 6.72Q3.67 5.95 4.53 5.08L5.08 4.53Q5.95 3.67 6.72 4.29L7.21 4.69Q7.98 5.31 8.79 4.98Z"/><circle cx="12" cy="12" r="3.400"/></svg>

<!-- header icons -->
<svg class="abs" style="left:1660.200px;top:15.900px;width:22.600px;height:22.600px" viewBox="0 0 24 24" fill="none" stroke="#5f6166" stroke-width="1.700" stroke-linejoin="round"><path d="M9.30 4.77Q10.11 4.43 10.22 3.44L10.28 2.82Q10.39 1.83 11.61 1.83L12.39 1.83Q13.61 1.83 13.72 2.82L13.78 3.44Q13.89 4.43 14.70 4.77L15.21 4.98Q16.02 5.31 16.79 4.69L17.28 4.29Q18.05 3.67 18.92 4.53L19.47 5.08Q20.33 5.95 19.71 6.72L19.31 7.21Q18.69 7.98 19.02 8.79L19.23 9.30Q19.57 10.11 20.56 10.22L21.18 10.28Q22.17 10.39 22.17 11.61L22.17 12.39Q22.17 13.61 21.18 13.72L20.56 13.78Q19.57 13.89 19.23 14.70L19.02 15.21Q18.69 16.02 19.31 16.79L19.71 17.28Q20.33 18.05 19.47 18.92L18.92 19.47Q18.05 20.33 17.28 19.71L16.79 19.31Q16.02 18.69 15.21 19.02L14.70 19.23Q13.89 19.57 13.78 20.56L13.72 21.18Q13.61 22.17 12.39 22.17L11.61 22.17Q10.39 22.17 10.28 21.18L10.22 20.56Q10.11 19.57 9.30 19.23L8.79 19.02Q7.98 18.69 7.21 19.31L6.72 19.71Q5.95 20.33 5.08 19.47L4.53 18.92Q3.67 18.05 4.29 17.28L4.69 16.79Q5.31 16.02 4.98 15.21L4.77 14.70Q4.43 13.89 3.44 13.78L2.82 13.72Q1.83 13.61 1.83 12.39L1.83 11.61Q1.83 10.39 2.82 10.28L3.44 10.22Q4.43 10.11 4.77 9.30L4.98 8.79Q5.31 7.98 4.69 7.21L4.29 6.72Q3.67 5.95 4.53 5.08L5.08 4.53Q5.95 3.67 6.72 4.29L7.21 4.69Q7.98 5.31 8.79 4.98Z"/><circle cx="12" cy="12" r="3.500"/></svg>
<svg class="abs" style="left:1699.600px;top:16px;width:24px;height:24px" viewBox="0 0 24 24" fill="none" stroke="#5b5f66" stroke-width="1.700" stroke-linecap="round" stroke-linejoin="round"><circle cx="12" cy="13.200" r="8"/><path d="M12.200 9.300v4h2.800M3 5.300L6.800 2.800M21 5.300L17.200 2.800"/></svg>
<svg class="abs" style="left:1738.800px;top:15.700px;width:24px;height:24px" viewBox="0 0 24 24" fill="none" stroke="#3f4a5c" stroke-width="1.700" stroke-linecap="round" stroke-linejoin="round"><path d="M2.800 18.200h18.400M5 18c.8-1.500 1.300-3 1.300-5.500v-2c0-3 1.900-5 4-5.700.2-1.600.9-2.300 1.700-2.300s1.500.7 1.700 2.300c2.100.7 4 2.700 4 5.700v2c0 2.500.5 4 1.300 5.500M8.800 18.500c0 2 1.400 3.300 3.200 3.300s3.200-1.300 3.200-3.300"/></svg>
<svg class="abs" style="left:1782.900px;top:15.800px;width:24px;height:24px" viewBox="0 0 24 24" fill="none" stroke="#333" stroke-width="1.500" stroke-linecap="round" stroke-linejoin="round"><circle cx="12" cy="12" r="9.800"/><path d="M8.800 9.500c0-1.900 1.400-3.200 3.300-3.200s3.200 1.300 3.200 2.900c0 2.300-3.100 2.500-3.100 5.300" stroke-width="1.800"/><circle cx="12.200" cy="17.600" r="1.100" fill="#333" stroke="none"/></svg>
<svg class="abs" style="left:1827px;top:15.800px;width:24px;height:24px" viewBox="0 0 24 24" fill="none" stroke="#74777d" stroke-width="1.500"><circle cx="12" cy="12" r="10"/><circle cx="7.300" cy="12" r="1" fill="#74777d" stroke="none"/><circle cx="12" cy="12" r="1" fill="#74777d" stroke="none"/><circle cx="16.700" cy="12" r="1" fill="#74777d" stroke="none"/></svg>
<!-- avatar -->
<svg class="abs" style="left:1866.500px;top:9.600px;width:36px;height:36px" viewBox="0 0 36 36"><defs><clipPath id="av"><circle cx="18" cy="18" r="16.300"/></clipPath></defs><path d="M18 .6A17.400 17.400 0 0 0 18 35.400Z" fill="#f5363e"/><path d="M18 .6A17.400 17.400 0 0 1 18 35.400Z" fill="#2f8df5"/><circle cx="18" cy="18" r="16" fill="#f6d83a"/><g clip-path="url(#av)" fill="#fff"><circle cx="18" cy="13.500" r="5.600"/><path d="M6.500 34c0-7 4.500-11.800 11.500-11.800S29.500 27 29.500 34z"/></g></svg>
<div class="abs" style="left:1889.300px;top:6px;width:18px;height:18px;border-radius:9px;background:#f5373f"></div>
<div class="tx" style="left:1894.800px;top:7.600px;font-size:12.500px;line-height:15px;font-weight:bold;color:#fff">1</div>

<!-- blue side tab -->
<div class="abs" style="left:1904px;top:312px;width:18px;height:98.600px;background:#2b50ed;border-radius:7px 0 0 7px;box-shadow:0 2px 4px rgba(0,0,0,.25)"></div>
<svg class="abs" style="left:1908.300px;top:355.800px;width:8px;height:12px" viewBox="0 0 8 12" fill="none" stroke="#fff" stroke-width="1.600" stroke-linecap="round" stroke-linejoin="round"><path d="M6 2.200L2.300 6 6 9.800"/></svg>
<!-- right-edge shadow -->
<div class="abs" style="left:1906px;top:640px;width:16px;height:270px;background:linear-gradient(90deg,rgba(120,120,120,0) 0%,rgba(120,120,120,.12) 40%,rgba(110,110,110,.5) 75%,rgba(100,100,100,.8) 100%);-webkit-mask-image:linear-gradient(180deg,transparent 0,#000 25%,#000 88%,transparent 100%);mask-image:linear-gradient(180deg,transparent 0,#000 25%,#000 88%,transparent 100%)"></div>

<!-- dropdown menu -->
<div class="abs" style="left:1407.100px;top:218.800px;width:234.800px;height:105.100px;background:#fff;border-radius:4px;box-shadow:0 3px 12px rgba(0,0,0,.22),0 0 3px rgba(0,0,0,.08)"></div>
<svg class="abs" style="left:1421.600px;top:228.600px;width:15px;height:15px" viewBox="0 0 15 15" fill="none" stroke="#6f7590" stroke-width="1.800" stroke-linecap="butt"><path d="M7.500 .5v14M.5 7.500h14"/></svg>
<div class="tx" style="left:1451.400px;top:226.800px;line-height:18px;font-size:14.300px;color:#333;letter-spacing:-.08px">Thêm tài sản</div>
<svg class="abs" style="left:1419.800px;top:261.500px;width:18px;height:18.500px" viewBox="0 0 18 18.500" fill="none" stroke="#333" stroke-width="1.400" stroke-linecap="round" stroke-linejoin="round"><path d="M9 1v11.500M4.600 8.300L9 12.700l4.400-4.400M1 13.500c0 2.700 1.300 4 3.900 4h8.200c2.600 0 3.900-1.300 3.900-4"/></svg>
<div class="tx" style="left:1451.400px;top:262.100px;line-height:18px;font-size:14.300px;color:#333;letter-spacing:-.28px">Nhập khẩu</div>
<svg class="abs" style="left:1419.800px;top:296.600px;width:18.500px;height:18.500px" viewBox="0 0 18.500 18.500" fill="none" stroke="#333" stroke-width="1.400" stroke-linecap="round" stroke-linejoin="round"><path d="M10 17H5c-2.600 0-4-1.400-4-4V5c0-2.600 1.400-4 4-4h8c2.600 0 4 1.400 4 4v6.500M5.500 5.300h3.500M5.500 9.300h6.500M12 15h5.500M15.300 12.800l2.300 2.200-2.300 2.200"/></svg>
<div class="tx" style="left:1447.100px;top:297.100px;line-height:18px;font-size:14.300px;color:#333;letter-spacing:-.22px">Kế thừa dữ liệu năm trước</div>
<!-- red highlight -->
<div class="abs" style="left:1406.900px;top:214.900px;width:156px;height:40.800px;border:4px solid #fb3c40"></div>
<!--/OVER-->
</div>

</div>
</body>
</html>
